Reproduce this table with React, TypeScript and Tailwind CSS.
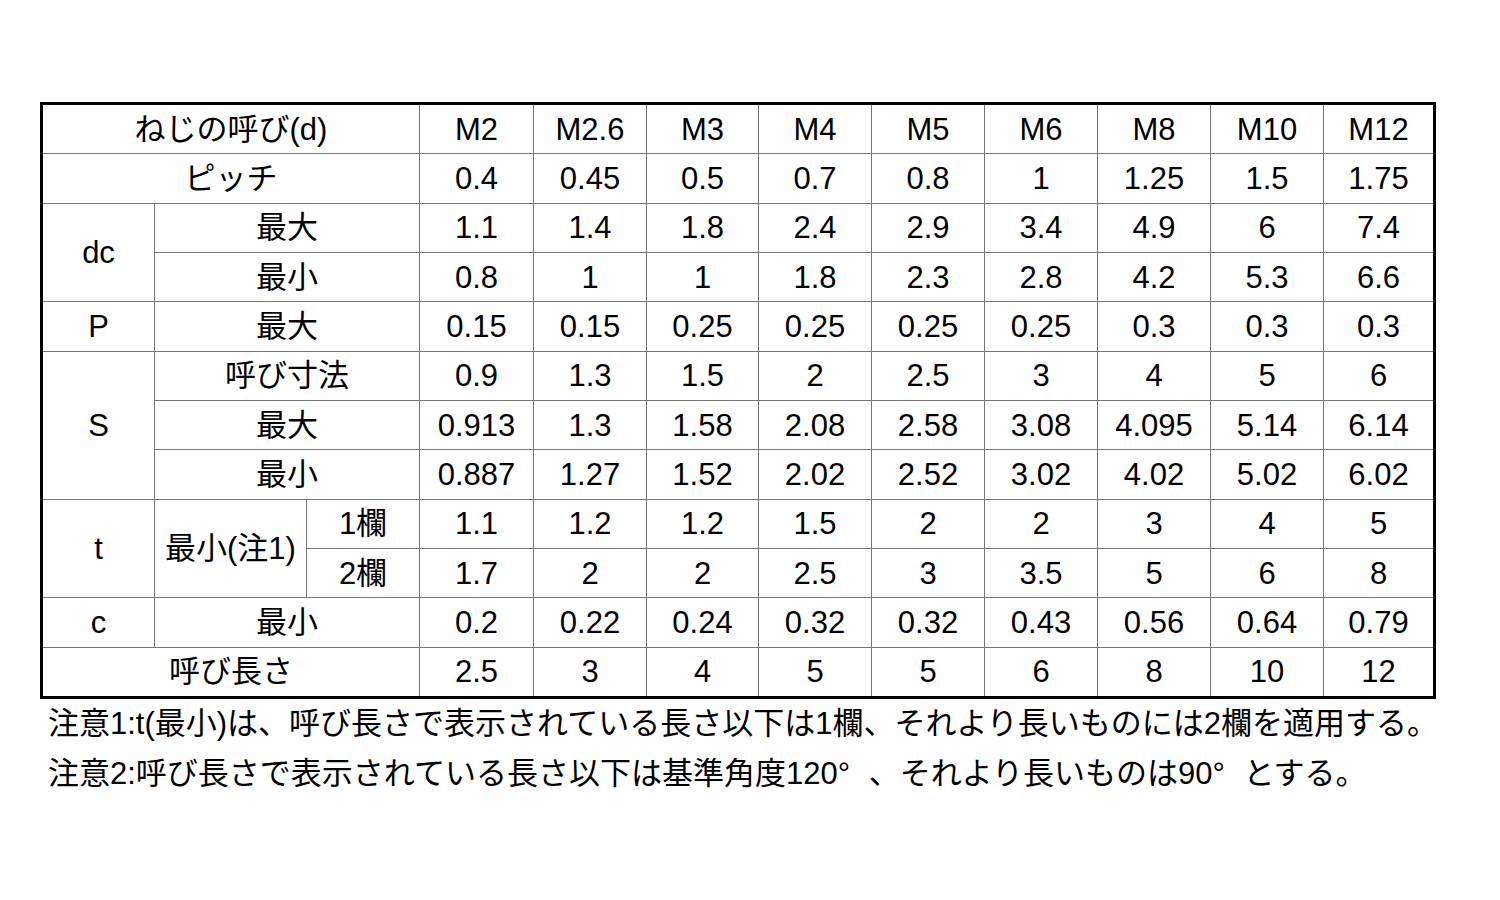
const sizes = ["M2", "M2.6", "M3", "M4", "M5", "M6", "M8", "M10", "M12"];

type Row = { labels: { text: string; cls: string }[]; values: string[] };

const rows: Row[] = [
	{ labels: [{ text: "ねじの呼び(d)", cls: "col-span-3" }], values: sizes },
	{
		labels: [{ text: "ピッチ", cls: "col-span-3" }],
		values: ["0.4", "0.45", "0.5", "0.7", "0.8", "1", "1.25", "1.5", "1.75"],
	},
	{
		labels: [
			{ text: "dc", cls: "row-span-2" },
			{ text: "最大", cls: "col-span-2" },
		],
		values: ["1.1", "1.4", "1.8", "2.4", "2.9", "3.4", "4.9", "6", "7.4"],
	},
	{
		labels: [{ text: "最小", cls: "col-span-2" }],
		values: ["0.8", "1", "1", "1.8", "2.3", "2.8", "4.2", "5.3", "6.6"],
	},
	{
		labels: [
			{ text: "P", cls: "" },
			{ text: "最大", cls: "col-span-2" },
		],
		values: ["0.15", "0.15", "0.25", "0.25", "0.25", "0.25", "0.3", "0.3", "0.3"],
	},
	{
		labels: [
			{ text: "S", cls: "row-span-3" },
			{ text: "呼び寸法", cls: "col-span-2" },
		],
		values: ["0.9", "1.3", "1.5", "2", "2.5", "3", "4", "5", "6"],
	},
	{
		labels: [{ text: "最大", cls: "col-span-2" }],
		values: ["0.913", "1.3", "1.58", "2.08", "2.58", "3.08", "4.095", "5.14", "6.14"],
	},
	{
		labels: [{ text: "最小", cls: "col-span-2" }],
		values: ["0.887", "1.27", "1.52", "2.02", "2.52", "3.02", "4.02", "5.02", "6.02"],
	},
	{
		labels: [
			{ text: "t", cls: "row-span-2" },
			{ text: "最小(注1)", cls: "row-span-2" },
			{ text: "1欄", cls: "" },
		],
		values: ["1.1", "1.2", "1.2", "1.5", "2", "2", "3", "4", "5"],
	},
	{
		labels: [{ text: "2欄", cls: "" }],
		values: ["1.7", "2", "2", "2.5", "3", "3.5", "5", "6", "8"],
	},
	{
		labels: [
			{ text: "c", cls: "" },
			{ text: "最小", cls: "col-span-2" },
		],
		values: ["0.2", "0.22", "0.24", "0.32", "0.32", "0.43", "0.56", "0.64", "0.79"],
	},
	{
		labels: [{ text: "呼び長さ", cls: "col-span-3" }],
		values: ["2.5", "3", "4", "5", "5", "6", "8", "10", "12"],
	},
];

function Deg() {
	return <span className="inline-block w-[1em]">°</span>;
}

export default function App() {
	return (
		<div className="min-h-[900px] w-[1500px] bg-white pt-[102px] pl-[40px] text-black font-['Liberation_Sans','Noto_Sans_CJK_JP',sans-serif]">
			<div className="grid h-[597px] w-[1396px] grid-cols-[111px_151px_112px_113px_112px_111px_112px_112px_112px_112px_112px_1fr] grid-rows-[repeat(12,minmax(0,1fr))] gap-px border-[3px] border-black bg-[#777777]">
				{rows.map((row, i) => (
					<>
						{row.labels.map((l, j) => (
							<div
								key={`l-${i}-${j}`}
								className={`flex items-center justify-center bg-white text-[31px] leading-none ${l.cls}`}
							>
								{l.text}
							</div>
						))}
						{row.values.map((v, j) => (
							<div
								key={`v-${i}-${j}`}
								className="flex items-center justify-center bg-white text-[31px] leading-none"
							>
								{v}
							</div>
						))}
					</>
				))}
			</div>
			<div className="pl-[8px] text-[31px] leading-[50px] whitespace-nowrap">
				<p>注意1:t(最小)は、呼び長さで表示されている長さ以下は1欄、それより長いものには2欄を適用する。</p>
				<p>
					注意2:呼び長さで表示されている長さ以下は基準角度120<Deg />、それより長いものは90<Deg />とする。
				</p>
			</div>
		</div>
	);
}
